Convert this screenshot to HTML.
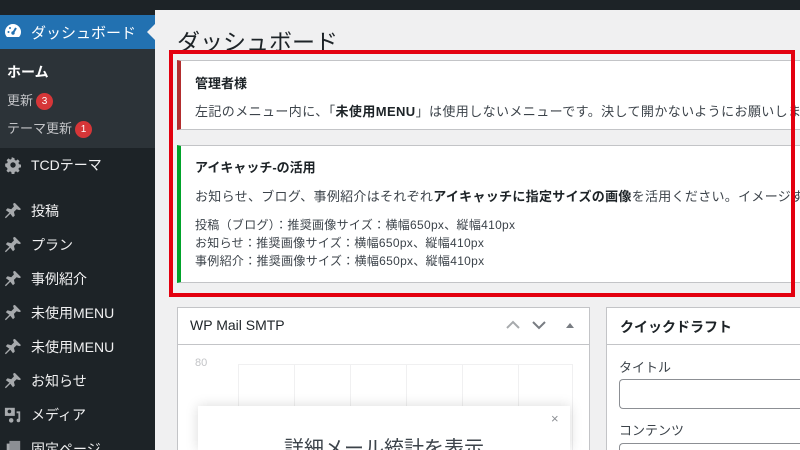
<!DOCTYPE html><html><head><meta charset="utf-8"><style>
*{margin:0;padding:0;box-sizing:border-box}
html,body{width:800px;height:450px;overflow:hidden}
body{background:#f0f0f1;font-family:"Liberation Sans","Noto Sans CJK JP",sans-serif;position:relative;color:#3c434a}
.a{position:absolute}
#top{left:0;top:0;width:800px;height:10px;background:#1d2327}
#side{left:0;top:0;width:155px;height:450px;background:#1d2327}
.mi{position:absolute;left:0;width:155px;height:20px;color:#f0f0f1;font-size:14px;overflow:hidden}
.mi svg{position:absolute;left:4px;top:1px}
.mi span{position:absolute;left:31px;top:0}
.badge{display:inline-block;background:#d63638;color:#fff;border-radius:9px;font-size:10px;width:17px;height:17px;text-align:center;line-height:17px;vertical-align:middle;margin-left:3px}
.box{background:#fff;border:1px solid #c3c4c7}
.clip{overflow:hidden;white-space:nowrap}
</style></head><body>
<svg width="0" height="0" style="position:absolute"><defs><symbol id="pin" viewBox="0 0 20 20"><path d="M12 1l7 7-2 1-3-1-3 3 1 4-2 2-3-4-5 5-1-1 5-5-4-3 2-2 4 1 3-3-1-3z" fill="#a7aaad"/></symbol></defs></svg>
<div class="a" id="top"></div>
<div class="a" id="side"></div>
<div class="a" style="left:0;top:15px;width:155px;height:34px;background:#2271b1"></div>
<div class="a" style="left:147px;top:24px;width:0;height:0;border-top:8px solid transparent;border-bottom:8px solid transparent;border-right:8px solid #f0f0f1"></div>
<svg class="a" style="left:4px;top:23px" width="18" height="16" viewBox="0 0 18 16"><path d="M9 1a8 8 0 0 0-8 8c0 2 .7 3.8 2 5h12c1.3-1.2 2-3 2-5a8 8 0 0 0-8-8z" fill="#fff"/><path d="M9 10 L12 5" stroke="#2271b1" stroke-width="2"/><circle cx="9" cy="10" r="1.7" fill="#2271b1"/><circle cx="4.5" cy="9" r="1" fill="#2271b1"/><circle cx="6" cy="5" r="1" fill="#2271b1"/></svg>
<div class="a" style="left:31px;top:22px;color:#fff;font-size:15px">ダッシュボード</div>
<div class="a" style="left:0;top:49px;width:155px;height:99px;background:#2c3338"></div>
<div class="a" style="left:7px;top:62px;color:#fff;font-size:14px;font-weight:bold">ホーム</div>
<div class="a" style="left:7px;top:90px;color:#c3c4c7;font-size:13px">更新<span class="badge">3</span></div>
<div class="a" style="left:7px;top:118px;color:#c3c4c7;font-size:13px">テーマ更新<span class="badge">1</span></div>
<div class="mi" style="top:155px"><svg width="18" height="18" viewBox="0 0 20 20"><path d="M10 2l1.5.2.4 2.2 1.5.7 1.9-1.3 2 2-1.3 1.9.7 1.5 2.2.4v3l-2.2.4-.7 1.5 1.3 1.9-2 2-1.9-1.3-1.5.7-.4 2.2h-3l-.4-2.2-1.5-.7-1.9 1.3-2-2 1.3-1.9-.7-1.5L1.3 11.5v-3l2.2-.4.7-1.5-1.3-1.9 2-2 1.9 1.3 1.5-.7.4-2.2z" fill="#a7aaad"/><circle cx="10" cy="10" r="3" fill="#1d2327"/></svg><span>TCDテーマ</span></div>
<div class="mi" style="top:201px"><svg width="18" height="18"><use href="#pin"/></svg><span>投稿</span></div>
<div class="mi" style="top:235px"><svg width="18" height="18"><use href="#pin"/></svg><span>プラン</span></div>
<div class="mi" style="top:269px"><svg width="18" height="18"><use href="#pin"/></svg><span>事例紹介</span></div>
<div class="mi" style="top:303px"><svg width="18" height="18"><use href="#pin"/></svg><span>未使用MENU</span></div>
<div class="mi" style="top:337px"><svg width="18" height="18"><use href="#pin"/></svg><span>未使用MENU</span></div>
<div class="mi" style="top:371px"><svg width="18" height="18"><use href="#pin"/></svg><span>お知らせ</span></div>
<div class="mi" style="top:405px"><svg width="18" height="18" viewBox="0 0 20 20"><rect x="1" y="2" width="11" height="9" fill="#a7aaad"/><circle cx="6" cy="6" r="2" fill="#1d2327"/><path d="M14 6h4v10a2 2 0 1 1-2-2V8h-2z" fill="#a7aaad"/><circle cx="8" cy="16" r="2.5" fill="#a7aaad"/></svg><span>メディア</span></div>
<div class="mi" style="top:439px;height:11px"><svg width="18" height="18" viewBox="0 0 20 20"><rect x="3" y="4" width="12" height="16" fill="#a7aaad"/><rect x="6" y="1" width="12" height="16" fill="#8c8f94"/></svg><span>固定ページ</span></div>
<div class="a" style="left:177px;top:23px;font-size:23px;color:#1d2327">ダッシュボード</div>
<div class="a box" style="left:177px;top:60px;width:623px;height:70px;border-left:4px solid #b32d2e;border-right:none"></div>
<div class="a" style="left:195px;top:73px;font-size:13px;font-weight:bold;color:#1d2327">管理者様</div>
<div class="a clip" style="left:195px;top:101px;width:605px;font-size:13px;letter-spacing:.4px">左記のメニュー内に、「<b style="color:#1d2327">未使用MENU</b>」は使用しないメニューです。決して開かないようにお願いします。</div>
<div class="a box" style="left:177px;top:145px;width:623px;height:138px;border-left:4px solid #00a32a;border-right:none"></div>
<div class="a" style="left:195px;top:157px;font-size:13px;font-weight:bold;color:#1d2327">アイキャッチ-の活用</div>
<div class="a clip" style="left:195px;top:186px;width:605px;font-size:13px;letter-spacing:.3px">お知らせ、ブログ、事例紹介はそれぞれ<b style="color:#1d2327">アイキャッチに指定サイズの画像</b>を活用ください。イメージするのに</div>
<div class="a" style="left:195px;top:216px;font-size:12px;line-height:18px;white-space:nowrap;letter-spacing:.3px">投稿（ブログ）：推奨画像サイズ：横幅650px、縦幅410px<br>お知らせ：推奨画像サイズ：横幅650px、縦幅410px<br>事例紹介：推奨画像サイズ：横幅650px、縦幅410px</div>
<div class="a" style="left:169px;top:50px;width:626px;height:247px;border:4px solid #e3000f"></div>
<div class="a box" style="left:177px;top:307px;width:413px;height:143px;border-bottom:none"></div>
<div class="a" style="left:177px;top:344px;width:413px;height:1px;background:#c3c4c7"></div>
<div class="a" style="left:190px;top:317px;font-size:14px;color:#1d2327">WP Mail SMTP</div>
<svg class="a" style="left:506px;top:319px" width="70" height="12"><path d="M1 9l6-6 6 6" stroke="#a7aaad" stroke-width="2" fill="none"/><path d="M27 3l6 6 6-6" stroke="#787c82" stroke-width="2" fill="none"/><path d="M68 9l-4-5-4 5z" fill="#787c82"/></svg>
<div class="a" style="left:195px;top:357px;font-size:11px;color:#c3c4c7">80</div>
<div class="a" style="left:238px;top:364px;width:335px;height:86px;border:1px solid #f0f0f1;border-bottom:none;background:repeating-linear-gradient(90deg,transparent 0 55px,#f0f0f1 55px 56px)"></div>
<div class="a" style="left:198px;top:406px;width:372px;height:44px;background:#fff;box-shadow:0 0 12px rgba(0,0,0,.15);overflow:hidden">
<div class="a" style="left:353px;top:5px;font-size:13px;color:#8c8f94">×</div>
<div class="a" style="left:86px;top:26px;font-size:20px;color:#3c434a;white-space:nowrap">詳細メール統計を表示</div></div>
<div class="a box" style="left:606px;top:307px;width:194px;height:143px;border-right:none;border-bottom:none"></div>
<div class="a" style="left:606px;top:344px;width:194px;height:1px;background:#c3c4c7"></div>
<div class="a" style="left:620px;top:317px;font-size:14px;font-weight:bold;color:#1d2327">クイックドラフト</div>
<div class="a" style="left:619px;top:357px;font-size:13px">タイトル</div>
<div class="a" style="left:619px;top:379px;width:181px;height:30px;border:1px solid #8c8f94;border-right:none;border-radius:4px 0 0 4px"></div>
<div class="a" style="left:619px;top:420px;font-size:13px">コンテンツ</div>
<div class="a" style="left:619px;top:443px;width:181px;height:7px;border:1px solid #8c8f94;border-right:none;border-bottom:none;border-radius:4px 0 0 0"></div>
</body></html>
